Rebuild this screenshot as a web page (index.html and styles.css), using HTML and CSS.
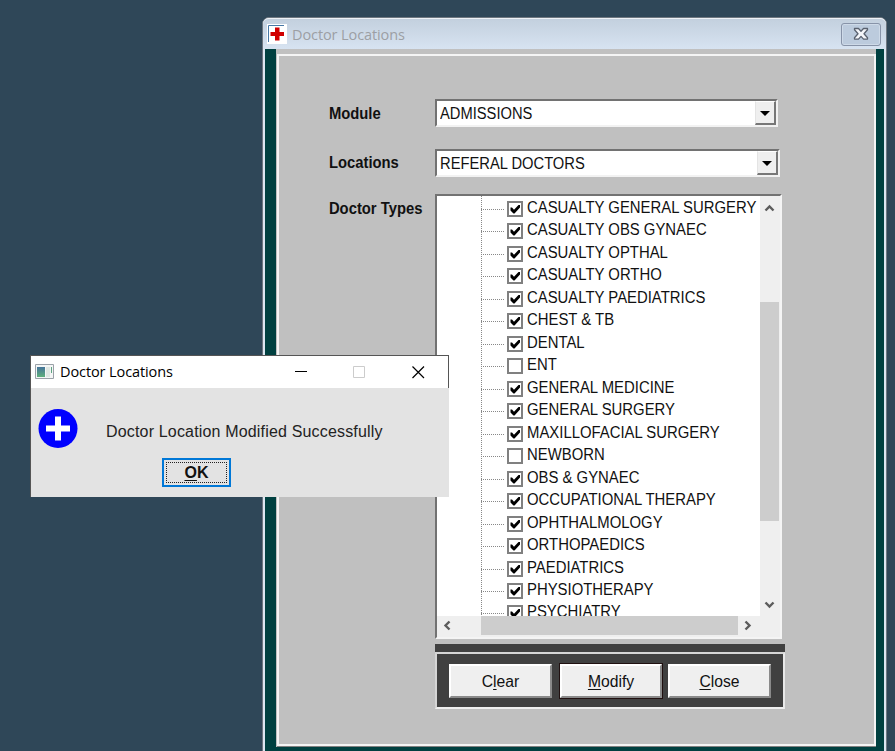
FILE: index.html
```
<!DOCTYPE html>
<html lang="en">
<head>
<meta charset="utf-8">
<title>Doctor Locations</title>
<link rel="stylesheet" href="styles.css">
</head>
<body>
<main class="window">
  <header class="titlebar">
    <svg class="app-icon" width="20" height="20" viewBox="0 0 20 20"><path fill="#fff" d="M0 0h20v20H0z"/><path fill="none" stroke="#4778a6" d="M1.500 18V1.500H17"/><path fill="#d00000" d="M8 3.500h4.500V8H17v4h-4.500v4.500H8V12H3.500V8H8z"/></svg>
    <h1 class="title">Doctor Locations</h1>
    <button class="close-btn" aria-label="Close"><svg width="16" height="14" viewBox="0 0 16 14"><path d="M1.500 1.500h4l2.500 2.700 2.500-2.700h4v1.300L11 6.800l3.500 4v1.300h-4L8 9.400l-2.500 2.700h-4v-1.300l3.500-4-3.500-4z" fill="#f4f6fa" stroke="#59616f" stroke-width="1.300" stroke-linejoin="round"/></svg></button>
  </header>
  <div class="body">
    <div class="panel">
      <div class="field module"><span class="label">Module</span>
        <div class="select sel-module"><span class="value">ADMISSIONS</span><i class="drop"></i></div></div>
      <div class="field locations"><span class="label">Locations</span>
        <div class="select sel-locations"><span class="value">REFERAL DOCTORS</span><i class="drop"></i></div></div>
      <div class="field types"><span class="label">Doctor Types</span>
        <div class="tree">
          <ul class="items" id="items"></ul>
          <div class="vbar">
            <svg width="11" height="8" viewBox="0 0 11 8"><path d="M1.500 6.500l4-4 4 4"/></svg>
            <div class="vthumb"></div>
            <svg width="11" height="8" viewBox="0 0 11 8"><path d="M1.500 1.500l4 4 4-4"/></svg>
          </div>
          <div class="hbar">
            <svg width="8" height="11" viewBox="0 0 8 11"><path d="M6.500 1.500l-4 4 4 4"/></svg>
            <div class="hthumb"></div>
            <svg width="8" height="11" viewBox="0 0 8 11"><path d="M1.500 1.500l4 4-4 4"/></svg>
          </div>
        </div></div>
      <div class="strip"></div>
      <div class="actions">
        <button class="btn"><span>C<u>l</u>ear</span></button>
        <button class="btn default"><span><u>M</u>odify</span></button>
        <button class="btn"><span><u>C</u>lose</span></button>
      </div>
    </div>
  </div>
</main>
<section class="dialog">
  <header class="dialog-title">
    <svg width="19" height="16" viewBox="0 0 19 16"><defs><linearGradient id="g" x2="0" y2="1"><stop stop-color="#45739a"/><stop offset="1" stop-color="#5fb07c"/></linearGradient></defs><path fill="#f4f6f6" stroke="#9ba1a8" d="M.5.5h18v14H.5z"/><path fill="url(#g)" d="M2 3h8v10H2z"/><path fill="#dfe7e3" d="M11 3h4v10h-4z"/><path fill="#5fa382" d="M16 3h1v6h-1z"/></svg>
    <h2>Doctor Locations</h2>
    <svg class="controls" width="132" height="14" viewBox="0 0 132 14"><path d="M1 6.500h12" stroke="#000"/><path d="M59.500 1.500h11v11h-11z" fill="none" stroke="#ccc"/><path d="M118.500 1.500l11.500 11.500M130 1.500L118.500 13" stroke="#000" stroke-width="1.200"/></svg>
  </header>
  <div class="dialog-body">
    <div class="message">
      <svg width="40" height="40" viewBox="0 0 40 40"><circle cx="20" cy="20.500" r="19.500" fill="#00f"/><path fill="#fff" d="M17 8.500h6v9h9v6h-9v9h-6v-9H8v-6h9z"/></svg>
      <p>Doctor Location Modified Successfully</p>
    </div>
    <button class="ok"><span><u>O</u>K</span></button>
  </div>
</section>
<script src="script.js"></script>
</body>
</html>
```
FILE: styles.css
```
* { box-sizing: border-box; }
body { margin: 0; width: 895px; height: 751px; overflow: hidden; position: relative; background: #2f4758; font-family: "Liberation Sans", Arial, sans-serif; color: #111; }
h1, h2, p, ul { margin: 0; padding: 0; font-weight: 400; }
button { font: inherit; color: inherit; padding: 0; }
.window { position: absolute; left: 262px; top: 17px; width: 625px; height: 760px; border: 1px solid #6e7780; border-radius: 7px 7px 0 0; padding: 0 2px 0 2px; background: #dce6f1; box-shadow: inset 0 1px #f3f6fa; }
.titlebar { height: 31px; margin: 0 -2px; padding: 0 5px 0 4px; display: flex; align-items: center; border-radius: 6px 6px 0 0; background: linear-gradient(#c3d0de, #d7e3f1); border-top: 1px solid #eef2f6; }
.title { font: 14.5px "Open Sans", sans-serif; color: #9c9fa4; margin-left: 5px; flex: 1; letter-spacing: -.1px; }
.close-btn { width: 40px; height: 23px; border: 1px solid #8793a8; border-radius: 3px; background: #bccbdd; box-shadow: inset 0 0 0 1px #cedae8; display: flex; align-items: center; justify-content: center; }
.body { height: 720px; border: solid #004040; border-width: 0 8px 0 11px; padding: 5px 0 0 1px; background: linear-gradient(#c0c0c0 698px, #004040 698px); }
.panel { height: 692px; border: 2px solid #f4f4f4; padding: 43px 0 0 49px; box-shadow: 0 1px #808080; }
.field { display: flex; align-items: flex-start; }
.label { width: 107px; padding-left: 1px; font-weight: 700; font-size: 16px; line-height: 20px; transform: scaleX(.925); transform-origin: left; }
.module .label { margin-top: 5px; }
.locations .label { margin-top: 4px; }
.types .label { margin-top: 5px; white-space: nowrap; }
.select { height: 28px; display: flex; justify-content: space-between; align-items: center; background: #fff; border: 2px solid; border-color: #727272 #f2f2f2 #f2f2f2 #727272; font-size: 16px; padding-left: 3px; }
.value { transform: scaleX(.92); transform-origin: left; padding-top: 1px; }
.sel-module { width: 343px; }
.sel-locations { width: 345px; }
.drop { width: 21px; height: 24px; background: #efefef; border: solid; border-width: 1px 2px 2px 1px; border-color: #fff #777 #777 #e4e4e4; display: grid; place-items: center; }
.drop::before { content: ""; margin-top: 2px; border: 5px solid transparent; border-top-color: #000; border-bottom: 0; }
.locations { margin-top: 22px; }
.types { margin-top: 17px; }
.tree { width: 347px; height: 445px; border: 2px solid; border-color: #727272 #f4f4f4 #f4f4f4 #727272; display: grid; grid-template: 420px 21px / 323px 20px; background: #efefef; }
.items { overflow: hidden; list-style: none; background: #fff; padding-left: 44px; background-image: repeating-linear-gradient(#888 0 1px, #fff 1px 2px); background-size: 1px 100%; background-position: 44px 0; background-repeat: no-repeat; }
.item { height: 22.470px; display: flex; align-items: flex-start; font-size: 16px; white-space: nowrap; }
.item::before { content: ""; flex: none; width: 24px; height: 1px; margin: 13px 2px 0 0; background: repeating-linear-gradient(90deg, #888 0 1px, #fff 1px 2px); }
.box { flex: none; width: 16px; height: 16px; border: 2px solid #808080; margin: 5px 4px 0 0; display: block; background: #fff; }
.box svg { display: block; width: 12px; height: 12px; }
.name { flex: none; line-height: 23px; transform: scaleX(.93); transform-origin: left; }
.vbar { display: flex; flex-direction: column; align-items: center; padding: 8px 2px 0 0; }
.vbar path, .hbar path { fill: none; stroke: #5c5c5c; stroke-width: 2.400; }
.vthumb { width: 19px; height: 219px; margin: 90px 0 80px; background: #cdcdcd; }
.vbar svg, .hbar svg { flex: none; }
.hbar { grid-column: 1 / 3; display: flex; align-items: center; padding: 0 0 2px 6px; }
.hthumb { width: 257px; height: 19px; margin: 0 6px 0 30px; background: #cdcdcd; }
.strip { width: 350px; height: 8px; margin: 5px 0 0 107px; background: #404040; }
.actions { width: 350px; height: 57px; margin: 0 0 0 107px; background: #404040; border: 2px solid; border-color: #d5d5d5 #e8e8e8 #eee #d5d5d5; display: flex; padding: 10px 0 0 12px; }
.btn { width: 103px; height: 34px; background: #efefef; border: 2px solid; border-color: #fff #8a8a8a #8a8a8a #fff; font-size: 16px; }
.btn span { display: block; transform: scaleX(.98); padding-top: 1px; }
.default { margin: 0 6px 0 8px; width: 102px; outline: 1px solid #201010; }
u { text-underline-offset: 2px; text-decoration-thickness: 1px; }
.dialog { position: absolute; left: 30px; top: 355px; width: 419px; height: 142px; border: 1px solid #555; border-bottom: 0; border-right: 0; background: #e3e3e3; }
.dialog-title { height: 32px; background: #fff; border-right: 1px solid #555; display: flex; align-items: center; padding: 0 22px 0 4px; }
.dialog-title h2 { font: 14.5px "Open Sans", sans-serif; margin: -2px 0 0 6px; flex: 1; color: #000; letter-spacing: -.1px; }
.dialog-body { padding: 20px 0 0 7px; }
.message { display: flex; align-items: center; height: 40px; gap: 28px; }
.message p { font-size: 16px; color: #222; padding-top: 7px; letter-spacing: .17px; }
.ok { display: block; width: 69px; height: 29px; margin: 10px 0 0 124px; padding: 2px; border: 2px solid #0078d7; background: #e3e3e3; font-weight: 700; font-size: 16px; }
.ok span { display: grid; grid-auto-flow: column; justify-content: center; align-items: center; width: 100%; height: 100%; border: 1px dotted #222; }
```
FILE: script.js
```
const names = ["CASUALTY GENERAL SURGERY", "CASUALTY OBS GYNAEC", "CASUALTY OPTHAL", "CASUALTY ORTHO", "CASUALTY PAEDIATRICS", "CHEST & TB", "DENTAL", "ENT", "GENERAL MEDICINE", "GENERAL SURGERY", "MAXILLOFACIAL SURGERY", "NEWBORN", "OBS & GYNAEC", "OCCUPATIONAL THERAPY", "OPHTHALMOLOGY", "ORTHOPAEDICS", "PAEDIATRICS", "PHYSIOTHERAPY", "PSYCHIATRY"];
const unchecked = new Set(["ENT", "NEWBORN"]);
const list = document.getElementById("items");
for (const name of names) {
  const li = document.createElement("li");
  li.className = "item";
  const box = document.createElement("span");
  box.className = "box";
  if (!unchecked.has(name)) box.innerHTML = '<svg viewBox="0 0 12 12"><path d="M1.500 4.500h1.500l2 2.300L9.500 2H11v2.500L5.500 10.500h-1L1.500 7.500z" fill="#000"/></svg>';
  const label = document.createElement("span");
  label.className = "name";
  label.textContent = name;
  li.append(box, label);
  list.append(li);
}
```
